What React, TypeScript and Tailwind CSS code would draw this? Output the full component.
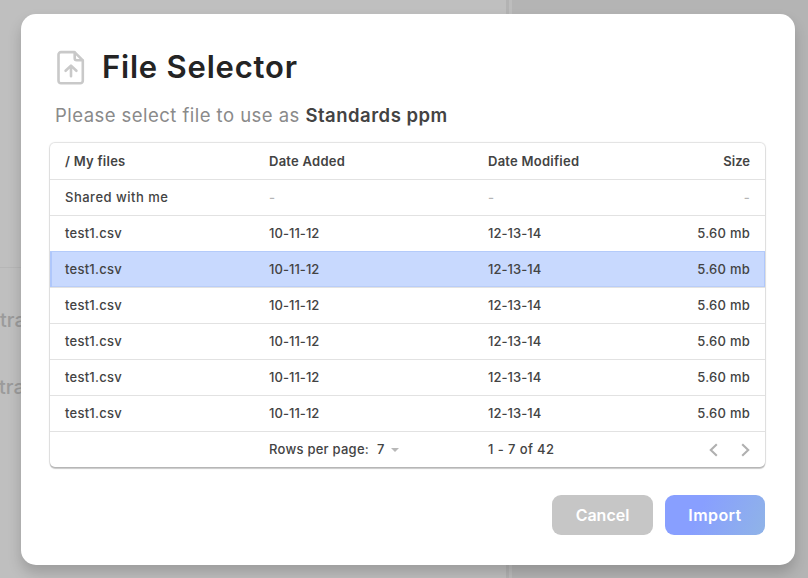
import React from 'react';

type Row = { name: string; added: string; modified: string; size: string; selected?: boolean };

const file: Row = { name: 'test1.csv', added: '10-11-12', modified: '12-13-14', size: '5.60 mb' };
const rows: Row[] = [file, { ...file, selected: true }, file, file, file, file];

const columns = 'grid h-9 grid-cols-[204px_219px_1fr_auto] items-center px-[15px] pt-px';

function FileUploadIcon() {
  return (
    <svg className="mt-[3px] h-[36px] w-[30px] shrink-0" viewBox="0 0 30 36" fill="none" stroke="#c9c9c9" strokeWidth="2.6" strokeLinecap="round" strokeLinejoin="round">
      <path d="M5 2.1h13.5l8.3 8.3v20.4a2.5 2.5 0 0 1-2.5 2.5H5a2.5 2.5 0 0 1-2.5-2.5V4.6A2.5 2.5 0 0 1 5 2.1Z" />
      <path d="M18.7 2.5v5.7a2 2 0 0 0 2 2h5.7" />
      <path d="M15 26.2v-10M9.6 20.8l5.4-5.2 5.4 5.2" />
    </svg>
  );
}

function Chevron({ right = false }: { right?: boolean }) {
  return (
    <svg className="h-[14px] w-[9px]" viewBox="0 0 9 14" fill="none" stroke="#b0b0b0" strokeWidth="2.1">
      <path d={right ? 'M1.2 1.2 7.2 7l-6 5.8' : 'M7.8 1.2 1.8 7l6 5.8'} />
    </svg>
  );
}

export default function App() {
  return (
    <div className="relative h-[578px] w-[808px] overflow-hidden bg-[#bfbfbf] font-['Inter','Liberation_Sans',sans-serif] text-[#434343]">
      <div className="absolute inset-0 flex">
        <div className="flex w-[506px] flex-col text-[20px] font-medium leading-[24px] text-[#9b9b9b]">
          <div className="h-[268px] border-b border-[#b6b6b6]" />
          <div className="mt-[40px]">tra</div>
          <div className="mt-[43px] -ml-px">tra</div>
        </div>
        <div className="w-[3px] bg-[#b3b3b3]" />
        <div className="w-[3px] bg-[#bdbdbd]" />
        <div className="flex-1 bg-[#b4b4b4]" />
      </div>

      <div className="absolute left-[21px] top-[14px] flex h-[551px] w-[774px] flex-col rounded-[15px] bg-white pl-[29px] pr-[30px] shadow-[0_8px_14px_rgba(0,0,0,0.18)]">
        <div className="flex h-[73px] items-start pl-[6px] pt-[33px]">
          <FileUploadIcon />
          <h1 className="ml-[16px] whitespace-nowrap text-[31px] font-semibold leading-[40px] tracking-[0.8px] text-[#242424]">File Selector</h1>
        </div>
        <p className="mt-[14px] whitespace-nowrap pl-[5px] text-[18.5px] leading-[28px] text-[#8a8a8a]">
          <span className="tracking-[0.46px]">Please select file to use as </span>
          <span className="font-semibold tracking-[0.5px] text-[#434343]">Standards ppm</span>
        </p>

        <div className="mt-[14px] h-[324px] w-[715px] rounded-[5px] text-[13px] font-medium tracking-[0.25px] shadow-[0_0_1px_1px_rgba(0,0,0,0.12),0_2px_1px_rgba(0,0,0,0.2)]">
          <div className={`${columns} font-semibold`}>
            <span>/ My files</span>
            <span>Date Added</span>
            <span>Date Modified</span>
            <span className="tracking-normal">Size</span>
          </div>
          <div className={`${columns} border-t border-[#e2e2e2]`}>
            <span className="tracking-[0.5px]">Shared with me</span>
            <span className="text-[#b5b5b5]">-</span>
            <span className="text-[#b5b5b5]">-</span>
            <span className="text-[#b5b5b5]">-</span>
          </div>
          {rows.map((row, i) => (
            <div
              key={i}
              className={`${columns} border-t ${row.selected ? 'border-[#b4cbfa] bg-[#c8d9fe] shadow-[inset_2px_0_0_#afc7fb,inset_-1px_0_0_#afc7fb,inset_0_-1px_0_#b9cdf8]' : 'border-[#e2e2e2]'}`}
            >
              <span>{row.name}</span>
              <span className="tracking-[0.05px]">{row.added}</span>
              <span className="tracking-[0.05px]">{row.modified}</span>
              <span>{row.size}</span>
            </div>
          ))}
          <div className={`${columns} border-t border-[#e2e2e2]`}>
            <span />
            <div className="flex items-center">
              <span>Rows per page:</span>
              <span className="ml-[8px]">7</span>
              <svg className="ml-[6px] h-[4px] w-[8px]" viewBox="0 0 8 4" fill="#b8b8b8"><path d="M0 0h8L4 4Z" /></svg>
            </div>
            <span className="tracking-[0.4px]">1 - 7 of 42</span>
            <div className="flex gap-[23px] pb-px">
              <Chevron />
              <Chevron right />
            </div>
          </div>
        </div>

        <div className="mt-[28px] flex justify-end gap-[12px] text-[16px] font-semibold text-white">
          <button className="h-[40px] w-[101px] rounded-[9px] bg-[#c6c6c6]">Cancel</button>
          <button className="h-[40px] w-[100px] rounded-[9px] bg-[linear-gradient(115deg,#889fff_35%,#8fb2e9_95%)] tracking-[0.4px]">Import</button>
        </div>
      </div>
    </div>
  );
}
